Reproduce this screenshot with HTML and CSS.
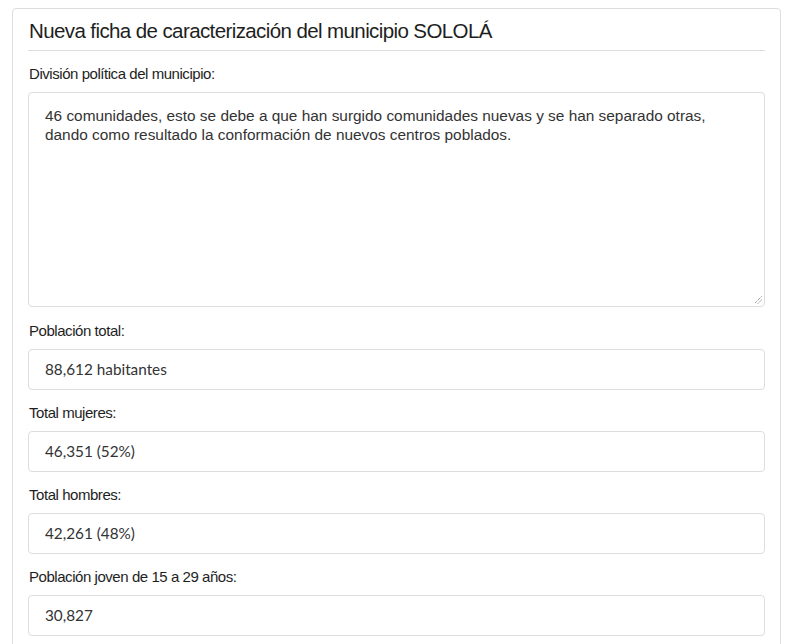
FILE: index.html
```html
<!DOCTYPE html>
<html lang="es">
<head>
<meta charset="utf-8">
<link rel="stylesheet" href="styles.css">
</head>
<body>
<div class="card">
  <h2 class="title">Nueva ficha de caracterización del municipio SOLOLÁ</h2>
  <div class="group">
    <label class="label">División política del municipio:</label>
    <div class="textarea">46 comunidades, esto se debe a que han surgido comunidades nuevas y se han separado otras, dando como resultado la conformación de nuevos centros poblados.<svg class="grip" width="9" height="9" viewBox="0 0 9 9"><path d="M8.5 1.5L1.5 8.5M8.5 5L5 8.5" stroke="#666" stroke-width="1" fill="none" stroke-dasharray="1 1"/></svg></div>
  </div>
  <div class="group">
    <label class="label">Población total:</label>
    <div class="input">88,612 habitantes</div>
  </div>
  <div class="group">
    <label class="label">Total mujeres:</label>
    <div class="input">46,351 (52%)</div>
  </div>
  <div class="group">
    <label class="label">Total hombres:</label>
    <div class="input">42,261 (48%)</div>
  </div>
  <div class="group">
    <label class="label">Población joven de 15 a 29 años:</label>
    <div class="input">30,827</div>
  </div>
</div>
</body>
</html>
```
FILE: styles.css
```css
html, body { margin: 0; padding: 0; background: #fff; }
body { padding: 8px 18px 0 12px; font-family: "Liberation Sans", Arial, sans-serif; color: #222; }
.card {
  border: 1px solid #ddd;
  border-radius: 4px;
  padding: 10px 15px 20px 15px;
  height: 700px;
  box-sizing: border-box;
}
.title {
  margin: 0 0 13px 0;
  font-size: 20.5px;
  letter-spacing: -0.6px;
  font-weight: normal;
  line-height: 23px;
  padding: 0 0 8px 1px;
  border-bottom: 1px solid #ddd;
  color: #1e1e1e;
}
.group { margin-bottom: 14px; }
.label { display: block; font-size: 15px; letter-spacing: -0.45px; line-height: 20px; margin-bottom: 8px; padding-left: 1px; color: #1e1e1e; }
.textarea {
  position: relative;
  height: 215px;
  box-sizing: border-box;
  border: 1px solid #ddd;
  border-radius: 4px;
  padding: 13px 26px 13px 16px;
  font-size: 15.4px;
  line-height: 19px;
  color: #333;
}
.grip { position: absolute; right: 2px; bottom: 2px; }
.input {
  height: 41px;
  box-sizing: border-box;
  border: 1px solid #ddd;
  border-radius: 4px;
  padding: 0 16px;
  font-family: Lato, sans-serif;
  font-size: 15.3px;
  line-height: 39px;
  color: #333;
}
.group:has(.input) { margin-bottom: 13px; }
```
